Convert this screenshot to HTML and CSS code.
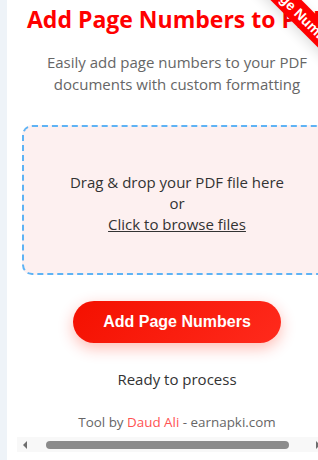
FILE: index.html
```html
<!DOCTYPE html>
<html lang="en">
<head>
    <meta charset="UTF-8">
    <meta name="viewport" content="width=device-width, initial-scale=1.0">
    <title>Add Page Numbers to PDF</title>
    <link rel="stylesheet" href="styles.css">
</head>
<body>
    <div class="card">
        <div class="ribbon">Page Numbers</div>

        <div class="content">
            <h1 class="title">Add Page Numbers to PDF</h1>
            <p class="subtitle">Easily add page numbers to your PDF documents with custom formatting</p>

            <div class="dropzone">
                Drag &amp; drop your PDF file here<br>
                or<br>
                <span class="browse">Click to browse files</span>
            </div>

            <button class="process-btn">Add Page Numbers</button>

            <p class="status">Ready to process</p>

            <p class="footer">Tool by <span class="author">Daud Ali</span> - earnapki.com</p>
        </div>

        <!-- horizontal scroller of the tool frame -->
        <div class="hscroll">
            <span class="arrow arrow-left"></span>
            <span class="thumb"></span>
            <span class="arrow arrow-right"></span>
        </div>
    </div>
</body>
</html>
```

FILE: styles.css
```css
html, body {
    overflow: hidden;
}
body {
    margin: 0;
    padding: 0 0 0 7px;
    background: #eef3f8;
    font-family: "Open Sans", "Liberation Sans", sans-serif;
    color: #333;
}
.card {
    position: relative;
    overflow: hidden;
    width: 340px;
    min-height: 460px;
    background: white;
}
.content {
    padding: 5px 15px 0;
    text-align: center;
}
.title {
    margin: 0;
    padding-left: 5px;
    font-size: 23px;
    line-height: 28px;
    font-weight: bold;
    color: #ff0000;
    text-align: left;
    white-space: nowrap;
}
.subtitle {
    margin: 18px 0 0;
    font-size: 15px;
    line-height: 22px;
    color: #666;
}
.dropzone {
    margin-top: 30px;
    padding: 45px 10px 38px;
    border: 2px dashed #5eb3f5;
    border-radius: 10px;
    background: #fdf0f0;
    font-size: 15px;
    line-height: 21px;
    color: #333;
}
.browse {
    text-decoration: underline;
}
.process-btn {
    margin-top: 26px;
    width: 208px;
    height: 42px;
    border: none;
    border-radius: 21px;
    background: linear-gradient(135deg, #f41000, #ff2a1c);
    box-shadow: 0 5px 15px rgba(255, 30, 0, 0.3);
    color: white;
    font-family: "Liberation Sans", Arial, sans-serif;
    font-size: 16px;
    font-weight: bold;
    cursor: pointer;
}
.status {
    margin: 26px 0 0;
    font-size: 15px;
    line-height: 21px;
    color: #333;
}
.footer {
    margin: 23px 0 0;
    font-size: 13.4px;
    line-height: 18px;
    color: #666;
}
.author {
    color: #ff5252;
}
.ribbon {
    position: absolute;
    top: 8px;
    right: -38px;
    width: 160px;
    height: 22px;
    line-height: 22px;
    transform: rotate(45deg);
    background: #ff0000;
    box-shadow: 0 4px 12px rgba(0, 0, 0, 0.12);
    color: white;
    font-family: "Liberation Sans", Arial, sans-serif;
    font-size: 14px;
    font-weight: bold;
    text-align: center;
    z-index: 2;
}
.hscroll {
    display: flex;
    align-items: center;
    margin: 6px 0 0 10px;
    width: 320px;
    height: 15px;
    background: #f8f8f8;
}
.arrow {
    width: 0;
    height: 0;
    border-top: 4px solid transparent;
    border-bottom: 4px solid transparent;
}
.arrow-left {
    margin-left: 6px;
    border-right: 4px solid #6e6e6e;
}
.arrow-right {
    margin-left: 27px;
    border-left: 4px solid #6e6e6e;
}
.thumb {
    margin-left: 19px;
    width: 243px;
    height: 8px;
    border-radius: 4px;
    background: #8b8b8b;
}
```
